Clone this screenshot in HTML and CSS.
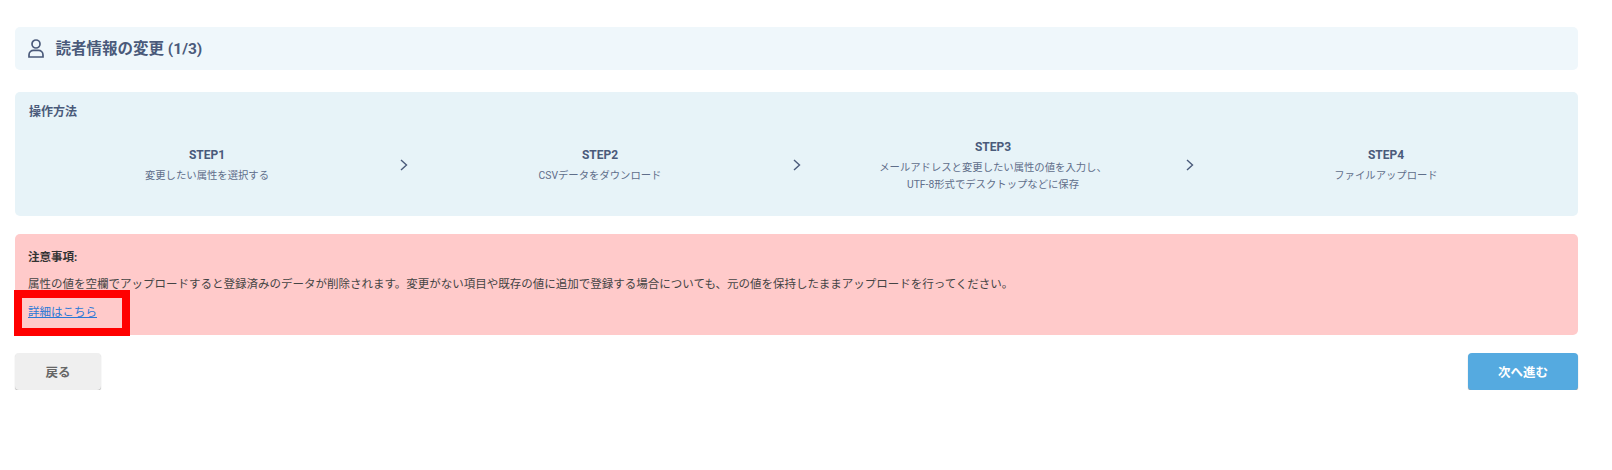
FILE: index.html
```html
<!DOCTYPE html>
<html lang="ja">
<head>
    <meta charset="UTF-8">
    <meta name="viewport" content="width=device-width, initial-scale=1.0">
    <link rel="stylesheet" href="styles.css">
    <title>読者情報の変更</title>
</head>
<body>
    <main class="page">
        <h1 class="title-bar">
            <svg class="user-icon" viewBox="0 0 16 19" width="16" height="19" fill="none" stroke="currentColor" stroke-width="1.7">
                <circle cx="8" cy="5" r="4"/>
                <path d="M1 18v-2c0-3 2.2-4.6 4.6-4.6h4.8c2.4 0 4.6 1.6 4.6 4.6v2z"/>
            </svg>
            <span>読者情報の変更 (1/3)</span>
        </h1>

        <section class="howto">
            <h2 class="howto-title">操作方法</h2>
            <div class="steps">
                <div class="step">
                    <div class="step-name">STEP1</div>
                    <p class="step-text">変更したい属性を選択する</p>
                </div>
                <svg class="chevron" viewBox="0 0 8 12" width="8" height="12" fill="none" stroke="currentColor" stroke-width="1.4"><path d="M1 1l5.5 5L1 11"/></svg>
                <div class="step">
                    <div class="step-name">STEP2</div>
                    <p class="step-text">CSVデータをダウンロード</p>
                </div>
                <svg class="chevron" viewBox="0 0 8 12" width="8" height="12" fill="none" stroke="currentColor" stroke-width="1.4"><path d="M1 1l5.5 5L1 11"/></svg>
                <div class="step">
                    <div class="step-name">STEP3</div>
                    <p class="step-text">メールアドレスと変更したい属性の値を入力し、<br>UTF-8形式でデスクトップなどに保存</p>
                </div>
                <svg class="chevron" viewBox="0 0 8 12" width="8" height="12" fill="none" stroke="currentColor" stroke-width="1.4"><path d="M1 1l5.5 5L1 11"/></svg>
                <div class="step">
                    <div class="step-name">STEP4</div>
                    <p class="step-text">ファイルアップロード</p>
                </div>
            </div>
        </section>

        <section class="notice">
            <h3 class="notice-title">注意事項:</h3>
            <p class="notice-text">属性の値を空欄でアップロードすると登録済みのデータが削除されます。変更がない項目や既存の値に追加で登録する場合についても、元の値を保持したままアップロードを行ってください。</p>
            <a class="notice-link" href="#">詳細はこちら</a>
            <div class="highlight"></div>
        </section>

        <div class="buttons">
            <button class="btn btn-back">戻る</button>
            <button class="btn btn-next">次へ進む</button>
        </div>
    </main>
</body>
</html>
```

FILE: styles.css
```css
*{
    box-sizing: border-box;
    font-family: Roboto, "Noto Sans CJK JP", sans-serif;
}

body{
    margin: 0;
    background-color: white;
    color: #4a5a7a;
}

.page{
    padding: 27px 34px 0 15px;
}

.title-bar{
    display: flex;
    align-items: center;
    gap: 11.5px;
    height: 43px;
    margin: 0;
    padding: 0 0 3px 13px;
    background-color: #eff7fb;
    border-radius: 5px;
    font-size: 15.5px;
    font-weight: 700;
    color: #4a5a7a;
}

.user-icon{
    flex: none;
    margin-top: 2px;
}

.howto{
    height: 124px;
    margin-top: 22px;
    padding: 12px 14px 0;
    background-color: #e7f3f8;
    border-radius: 5px;
}

.howto-title{
    margin: 0;
    font-size: 12px;
    line-height: 16px;
    font-weight: 700;
}

.steps{
    display: flex;
    align-items: center;
    height: 74px;
    margin-top: 9px;
}

.step{
    flex: 1;
    text-align: center;
}

.step-name{
    font-size: 12px;
    line-height: 16px;
    font-weight: 700;
}

.step-text{
    margin: 5px 0 0;
    font-size: 10.35px;
    line-height: 16.5px;
    color: #5f6e8a;
}

.chevron{
    flex: none;
    margin: -3px 14.5px 0;
}

.notice{
    position: relative;
    height: 101px;
    margin-top: 18px;
    padding: 15px 13px 0;
    background-color: #ffcaca;
    border-radius: 5px;
    color: #444;
}

.notice-title{
    margin: 0;
    font-size: 11.5px;
    line-height: 16px;
    font-weight: 700;
    color: #333;
}

.notice-text{
    margin: 11px 0 0;
    font-size: 11.5px;
    line-height: 16px;
}

.notice-link{
    display: inline-block;
    margin-top: 12px;
    font-size: 11.5px;
    line-height: 16px;
    color: #2a78d6;
}

.highlight{
    position: absolute;
    left: -1px;
    top: 56px;
    width: 116px;
    height: 46px;
    border: 8px solid #ff0000;
}

.buttons{
    display: flex;
    justify-content: space-between;
    margin-top: 18px;
}

.btn{
    height: 37px;
    border: none;
    border-radius: 4px;
    font-size: 12.5px;
    font-weight: 700;
}

.btn-back{
    width: 86px;
    background-color: #efefef;
    color: #666;
    box-shadow: 0 1px 1px rgba(0, 0, 0, 0.3);
}

.btn-next{
    width: 110px;
    background-color: #55aae0;
    color: white;
    box-shadow: 0 1px 1px rgba(0, 0, 0, 0.4);
}
```
